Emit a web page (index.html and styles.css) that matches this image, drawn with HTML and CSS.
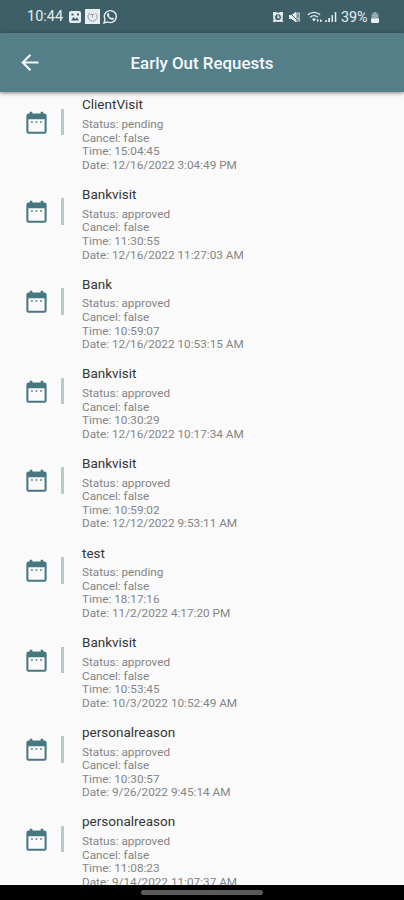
FILE: index.html
```
<!DOCTYPE html>
<html lang="en">
<head>
<meta charset="utf-8">
<title>Early Out Requests</title>
<link rel="stylesheet" href="styles.css">
</head>
<body>
<svg class="defs" aria-hidden="true">
  <symbol id="calendar" viewBox="0 0 24 24"><path fill-rule="evenodd" d="M5 4H6V2.500H8.300V4H15.700V2.500H18V4H19Q21 4 21 6V20Q21 22 19 22H5Q3 22 3 20V6Q3 4 5 4ZM4.800 9V20.300H19.200V9Z"/><path d="M7.200 10.800H8.700V12.300H7.200ZM11.200 10.800H12.700V12.300H11.200ZM15.200 10.800H16.700V12.300H15.200Z"/></symbol>
</svg>
<div class="phone">
  <div class="status-bar">
    <span class="clock">10:44</span>
    <svg class="st photo" viewBox="0 0 12 12"><rect width="12" height="12" rx="2"/><path class="cut" d="M2 9.500 4.500 6l1.700 2L8 6.500l2 3zM2.500 2.500h2v2h-2zM8 2.500h2v2H8z"/></svg>
    <svg class="st app" viewBox="0 0 15 15"><rect width="15" height="15"/><path class="thin" d="M5 3.800a4.600 4.600 0 1 0 5.500 .3M5 5.500h4M7.500 5.500v3"/></svg>
    <svg class="st chat" viewBox="0 0 15 15"><path class="line" d="M1 14l1-3.600a6 6 0 1 1 2.500 2.500z"/><path d="M5.300 3.800 6.500 6l-.6 .9c.5 1 1.200 1.700 2.300 2.200l.9-.7 2 .9c-.2 1.400-1.300 1.800-2.500 1.500C6 10 4.300 8 4 6c0-1 .5-1.800 1.300-2.200z"/></svg>
    <span class="spacer"></span>
    <svg class="st alarm" viewBox="0 0 12 12"><path d="M1 1H4L5 2H7L8 1H11V4L10.500 5V8L11 11H9L8 10.500H4L3 11H1L1.500 8V5L1 4Z"/><circle cx="6" cy="6.200" r="4.600"/><circle class="cut" cx="6" cy="6.200" r="2.900"/><path class="line" d="M6 4.200V6.500H7.600"/></svg>
    <svg class="st mute" viewBox="0 0 13 12"><path d="M1 4H3.500L8 .8V11.200L3.500 8H1Z"/><path class="soft" d="M8 1.500H12V11H8Z"/><path class="slash" d="M1.500 1.500L11 11M9.500 3.500Q11 5 9.500 6.500"/></svg>
    <svg class="st wifi" viewBox="0 0 16 12"><path class="line" d="M.8 3.800Q7 -1 13.200 3.800M3 6.300Q7 3 11 6.300"/><path d="M5 8Q7 6.500 9 8L7 10.500ZM9.500 8.500H12L10.700 11.500ZM13 8L15.500 9.700L13 11.300Z"/></svg>
    <svg class="st signal" viewBox="0 0 12 12"><path class="dim" d="M0 9H2V11H0ZM3 7H5V11H3Z"/><path d="M.5 9.500H2V11H.5ZM3.500 7H5V11H3.500ZM6.500 4H8V11H6.500ZM9.800 1H11.300V11H9.800Z"/></svg>
    <span class="battery-text">39%</span>
    <svg class="st battery" viewBox="0 0 8 11"><path class="dim" d="M2.500 0H5.500V1.500H6.500Q7.500 1.500 7.500 3V7H.5V3Q.5 1.500 1.500 1.500H2.500Z"/><path d="M0 6.500H8V10Q8 11 7 11H1Q0 11 0 10Z"/></svg>
  </div>
  <header class="app-bar">
    <svg class="back" viewBox="0 0 20 20"><path d="M18.500 10H2.500M10 1.800 1.800 10l8.200 8.200"/></svg>
    <h1>Early Out Requests</h1>
  </header>
  <main class="list">
    <article class="item">
      <svg class="cal"><use href="#calendar"/></svg><i class="bar"></i>
      <div><h2>ClientVisit</h2><p>Status: pending</p><p>Cancel: false</p><p>Time: 15:04:45</p><p>Date: 12/16/2022 3:04:49 PM</p></div>
    </article>
    <article class="item">
      <svg class="cal"><use href="#calendar"/></svg><i class="bar"></i>
      <div><h2>Bankvisit</h2><p>Status: approved</p><p>Cancel: false</p><p>Time: 11:30:55</p><p>Date: 12/16/2022 11:27:03 AM</p></div>
    </article>
    <article class="item">
      <svg class="cal"><use href="#calendar"/></svg><i class="bar"></i>
      <div><h2>Bank</h2><p>Status: approved</p><p>Cancel: false</p><p>Time: 10:59:07</p><p>Date: 12/16/2022 10:53:15 AM</p></div>
    </article>
    <article class="item">
      <svg class="cal"><use href="#calendar"/></svg><i class="bar"></i>
      <div><h2>Bankvisit</h2><p>Status: approved</p><p>Cancel: false</p><p>Time: 10:30:29</p><p>Date: 12/16/2022 10:17:34 AM</p></div>
    </article>
    <article class="item">
      <svg class="cal"><use href="#calendar"/></svg><i class="bar"></i>
      <div><h2>Bankvisit</h2><p>Status: approved</p><p>Cancel: false</p><p>Time: 10:59:02</p><p>Date: 12/12/2022 9:53:11 AM</p></div>
    </article>
    <article class="item">
      <svg class="cal"><use href="#calendar"/></svg><i class="bar"></i>
      <div><h2>test</h2><p>Status: pending</p><p>Cancel: false</p><p>Time: 18:17:16</p><p>Date: 11/2/2022 4:17:20 PM</p></div>
    </article>
    <article class="item">
      <svg class="cal"><use href="#calendar"/></svg><i class="bar"></i>
      <div><h2>Bankvisit</h2><p>Status: approved</p><p>Cancel: false</p><p>Time: 10:53:45</p><p>Date: 10/3/2022 10:52:49 AM</p></div>
    </article>
    <article class="item">
      <svg class="cal"><use href="#calendar"/></svg><i class="bar"></i>
      <div><h2>personalreason</h2><p>Status: approved</p><p>Cancel: false</p><p>Time: 10:30:57</p><p>Date: 9/26/2022 9:45:14 AM</p></div>
    </article>
    <article class="item">
      <svg class="cal"><use href="#calendar"/></svg><i class="bar"></i>
      <div><h2>personalreason</h2><p>Status: approved</p><p>Cancel: false</p><p>Time: 11:08:23</p><p>Date: 9/14/2022 11:07:37 AM</p></div>
    </article>
  </main>
  <footer class="nav-bar"><span class="handle"></span></footer>
</div>
</body>
</html>
```
FILE: styles.css
```
* { box-sizing: border-box; }
body { margin: 0; font-family: Roboto, sans-serif; background: #fafafa; }
.defs { display: none; }
.phone { width: 404px; height: 900px; display: flex; flex-direction: column; overflow: hidden; }

.status-bar { flex: none; height: 33px; padding: 0 25px 0 27px; display: flex; align-items: center; background: #3e5f68; color: #e6eef0; }
.clock { font-size: 14.5px; width: 42px; }
.spacer { flex: 1; }
.st { fill: #e6eef0; flex: none; }
.st .cut { fill: #3e5f68; }
.st .dim { fill: #93a8ad; }
.st .soft { fill: #a9babe; }
.st .line { fill: none; stroke: #e6eef0; stroke-width: 1.4; }
.st .thin { fill: none; stroke: #8ba1a7; stroke-width: 1; }
.st .slash { fill: none; stroke: #3e5f68; stroke-width: 1; }
.photo { width: 12px; height: 12px; }
.app { width: 15px; height: 15px; margin-left: 4px; }
.chat { width: 15px; height: 15px; margin-left: 3px; }
.alarm { width: 12px; height: 12px; }
.mute { width: 13px; height: 12px; margin-left: 4px; }
.wifi { width: 16px; height: 12px; margin-left: 6px; }
.signal { width: 12px; height: 12px; margin-left: 2px; }
.battery-text { font-size: 14.3px; margin-left: 4px; width: 28px; }
.battery { width: 8px; height: 11px; margin: 2px 0 0 2px; }

.app-bar { flex: none; height: 59px; display: grid; grid-template-columns: 60px 1fr 60px; align-items: center; background: #547f89; box-shadow: 0 1px 4px rgba(0, 0, 0, .5); z-index: 1; }
.back { width: 19px; height: 19px; margin-left: 21px; fill: none; stroke: #f4f8f9; stroke-width: 2.2; }
.app-bar h1 { margin: 0; text-align: center; font-size: 16.9px; font-weight: 500; color: #f4f8f9; }

.list { flex: 1; min-height: 0; overflow: hidden; padding-top: 4.3px; background: #fafafa; }
.item { height: 89.65px; display: flex; align-items: flex-start; }
.cal { width: 27px; height: 27px; margin: 12.5px 0 0 22.5px; fill: #477780; }
.bar { width: 3px; height: 26.5px; margin: 12.5px 18.5px 0 11px; background: #b4cccd; }
.item h2 { margin: 0 0 5.8px; font-size: 13.5px; line-height: 16px; font-weight: 400; color: #353535; }
.item p { margin: 0; font-size: 11.78px; line-height: 13.6px; color: #858585; white-space: nowrap; }

.nav-bar { flex: none; height: 15px; background: #000; display: flex; justify-content: center; align-items: center; }
.handle { width: 122px; height: 5px; border-radius: 3px; background: #5b5b5b; }
```
